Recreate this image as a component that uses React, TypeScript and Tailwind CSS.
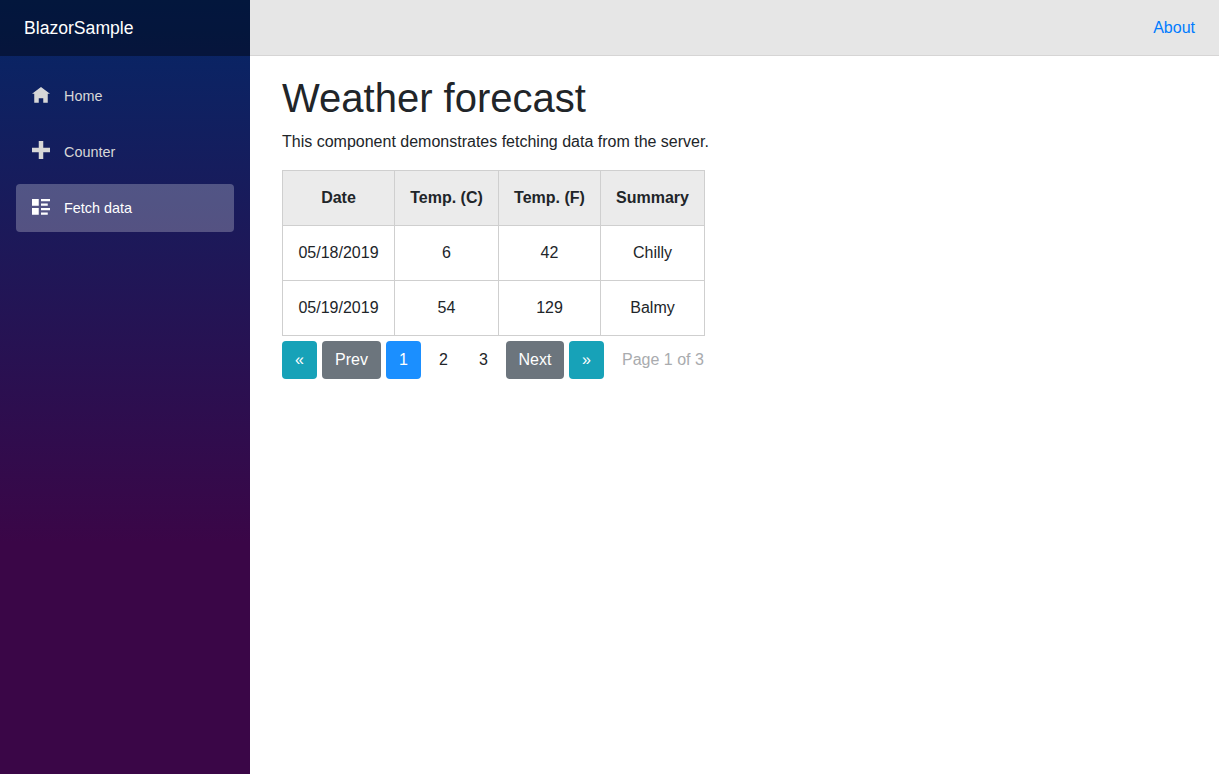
export default function App() {
  const nav = [
    { label: "Home", d: "M4 0l-4 3h1v4h2v-2h2v2h2v-4.03l1 .03-4-3z", row: "h-[48px] flex items-center pl-[16px] rounded-[4px] text-[#d7d7d7] text-[14.4px]", icon: "w-[18px] h-[18px] mr-[14px] fill-current shrink-0" },
    { label: "Counter", d: "M3 0v3h-3v2h3v3h2v-3h3v-2h-3v-3h-2z", row: "h-[48px] flex items-center pl-[16px] rounded-[4px] text-[#d7d7d7] text-[14.4px]", icon: "w-[18px] h-[18px] mr-[14px] fill-current shrink-0 -translate-y-[2px]" },
    { label: "Fetch data", d: "M0 0v3h3v-3h-3zm4 0v1h4v-1h-4zm0 2v1h3v-1h-3zm-4 2v3h3v-3h-3zm4 0v1h4v-1h-4zm0 2v1h3v-1h-3z", row: "h-[48px] flex items-center pl-[16px] rounded-[4px] bg-[rgba(255,255,255,0.25)] text-white text-[14.4px]", icon: "w-[18px] h-[18px] mr-[14px] fill-current shrink-0" },
  ];
  const rows = [
    ["05/18/2019", "6", "42", "Chilly"],
    ["05/19/2019", "54", "129", "Balmy"],
  ];
  const teal = "h-[38px] w-[35px] rounded-[4px] bg-[#17a2b8] text-white flex items-center justify-center";
  const grey = "h-[38px] rounded-[4px] bg-[#6c757d] text-white flex items-center justify-center";
  const plain = "h-[38px] w-[35px] rounded-[4px] text-[#212529] flex items-center justify-center";
  return (
    <div className="flex h-[774px] w-[1219px] overflow-hidden bg-white text-[16px] leading-[24px] text-[#212529] font-['Liberation_Sans',Arial,sans-serif]">
      <aside className="w-[250px] shrink-0 flex flex-col bg-[linear-gradient(180deg,#052767_0%,#3a0647_70%)]">
        <div className="h-[56px] flex items-center pl-[24px] bg-[rgba(0,0,0,0.4)] text-white text-[17.6px]">BlazorSample</div>
        <nav className="flex flex-col gap-[8px] pt-[16px] px-[16px]">
          {nav.map((n) => (
            <div key={n.label} className={n.row}>
              <svg viewBox="0 0 8 8" className={n.icon}>
                <path d={n.d} />
              </svg>
              {n.label}
            </div>
          ))}
        </nav>
      </aside>
      <div className="flex-1 flex flex-col min-w-0">
        <header className="h-[56px] shrink-0 flex items-center justify-end pr-[24px] bg-[#e6e6e6] border-b border-[#d6d5d5]">
          <a className="text-[#007bff]">About</a>
        </header>
        <main className="px-[32px] pt-[18px]">
          <h1 className="text-[40px] leading-[48px] font-normal mb-[8px]">Weather forecast</h1>
          <p className="mb-[16px]">This component demonstrates fetching data from the server.</p>
          <table className="border-collapse text-center w-[423px]">
            <thead>
              <tr className="bg-[#ebebeb]">
                <th className="h-[55px] p-0 w-[112px] border border-[#cfcfcf] font-bold">Date</th>
                <th className="h-[55px] p-0 w-[104px] border border-[#cfcfcf] font-bold">Temp. (C)</th>
                <th className="h-[55px] p-0 w-[102px] border border-[#cfcfcf] font-bold">Temp. (F)</th>
                <th className="h-[55px] p-0 w-[104px] border border-[#cfcfcf] font-bold">Summary</th>
              </tr>
            </thead>
            <tbody>
              {rows.map((r) => (
                <tr key={r[0]}>
                  {r.map((c, i) => (
                    <td key={i} className="h-[55px] p-0 border border-[#cfcfcf]">{c}</td>
                  ))}
                </tr>
              ))}
            </tbody>
          </table>
          <div className="flex items-center gap-[5px] mt-[5px]">
            <div className={teal}>«</div>
            <div className={grey + " w-[59px]"}>Prev</div>
            <div className="h-[38px] w-[35px] rounded-[4px] bg-[#1b8fff] text-white flex items-center justify-center">1</div>
            <div className={plain}>2</div>
            <div className={plain}>3</div>
            <div className={grey + " w-[58px]"}>Next</div>
            <div className={teal}>»</div>
            <span className="ml-[13px] text-[#a9abae]">Page 1 of 3</span>
          </div>
        </main>
      </div>
    </div>
  );
}
